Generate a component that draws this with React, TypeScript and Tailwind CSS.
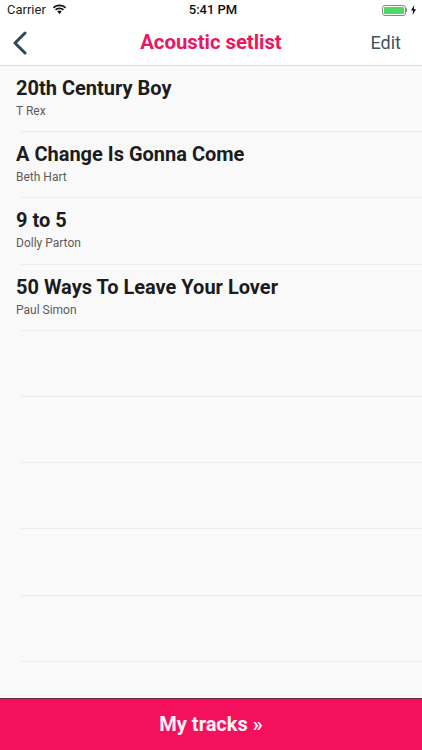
const SONGS = [
  { title: '20th Century Boy', artist: 'T Rex' },
  { title: 'A Change Is Gonna Come', artist: 'Beth Hart' },
  { title: '9 to 5', artist: 'Dolly Parton' },
  { title: '50 Ways To Leave Your Lover', artist: 'Paul Simon' },
]

function StatusBar() {
  return (
    <div className="h-5 flex items-center justify-between pl-[7px] pr-[6px] bg-white text-[13px] text-[#111] font-['Roboto',sans-serif]">
      <div className="flex items-center gap-[6px] w-[120px]">
        <span className="text-[#222]">Carrier</span>
        <svg width="15" height="11" viewBox="0 0 15 11" fill="#111" className="-mt-[2px]">
          <path d="M7.500 2.200c2.100 0 4 .8 5.500 2.200l1.100-1.200C12.300 1.500 10 .5 7.500.5S2.700 1.500.9 3.200L2 4.400c1.500-1.400 3.400-2.200 5.500-2.200z" />
          <path d="M7.500 5.200c1.300 0 2.500.5 3.400 1.300l1.100-1.200C10.800 4.200 9.200 3.500 7.500 3.500S4.200 4.200 3 5.300l1.100 1.200c.9-.8 2.100-1.300 3.400-1.300z" />
          <path d="M7.500 6.600c-.9 0-1.600.3-2.200.9l2.200 2.500 2.200-2.500c-.6-.6-1.300-.9-2.200-.9z" />
        </svg>
      </div>
      <span className="font-medium ml-[3px]">5:41 PM</span>
      <div className="flex items-center justify-end w-[120px]">
        <div className="w-[24px] h-[11px] border border-[#888] rounded-[3px] p-[1px]">
          <div className="w-full h-full bg-[#4cd964] rounded-[1px]" />
        </div>
        <div className="w-[1.500px] h-[4px] bg-[#888] rounded-r-[1px] mr-[4px]" />
        <svg width="5" height="10" viewBox="0 0 5 10" fill="#111">
          <path d="M3.200 0 0 5.600h2L1.600 10 5 4.200H2.900z" />
        </svg>
      </div>
    </div>
  )
}

function NavBar() {
  return (
    <div className="h-[46px] flex items-center justify-between bg-white border-b border-[#dcdcdc]">
      <div className="w-[70px] pl-[13px]">
        <svg width="14" height="24" viewBox="0 0 14 24" fill="none" stroke="#2f4858" strokeWidth="3" strokeLinecap="round" strokeLinejoin="round">
          <path d="M12 2 2 12l10 10" />
        </svg>
      </div>
      <span className="text-[20.300px] font-bold text-[#e9175f]">Acoustic setlist</span>
      <div className="w-[70px] text-right pr-[21px] text-[18px] text-[#3f5362]">Edit</div>
    </div>
  )
}

export default function App() {
  return (
    <div className="w-[422px] h-[750px] flex flex-col bg-[#f9f9f9] overflow-hidden font-['Roboto',sans-serif]">
      <StatusBar />
      <NavBar />
      <div className="flex-1 overflow-hidden">
        {SONGS.map(song => (
          <div key={song.title} className="h-[66.200px] flex flex-col">
            <div className="flex-1 pl-4 pt-[9px]">
              <div className="text-[20px] leading-[26px] font-bold text-[#1c1c1c]">{song.title}</div>
              <div className="text-[12px] leading-[16px] mt-[2px] text-[#5c5c5c]">{song.artist}</div>
            </div>
            <div className="ml-[21px] h-px bg-[#ececec]" />
          </div>
        ))}
        {Array.from({ length: 6 }).map((_, i) => (
          <div key={i} className="h-[66.200px] flex flex-col justify-end">
            <div className="ml-[21px] h-px bg-[#ececec]" />
          </div>
        ))}
      </div>
      <div className="h-[52.500px] shrink-0 flex items-center justify-center bg-[#f5105d] border-t border-[#6b2a3e] text-[20px] font-bold text-[#fdf3f6]">
        My tracks »
      </div>
    </div>
  )
}
